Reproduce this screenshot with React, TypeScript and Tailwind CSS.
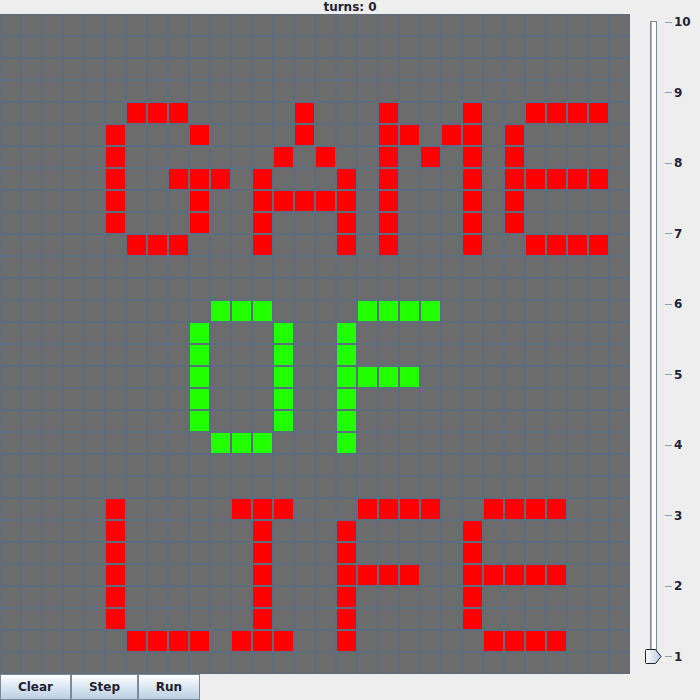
import React from "react";

const R: Record<number, number[]> = {
  4: [6, 7, 8, 14, 18, 22, 25, 26, 27, 28],
  5: [5, 9, 14, 18, 19, 21, 22, 24],
  6: [5, 13, 15, 18, 20, 22, 24],
  7: [5, 8, 9, 10, 12, 16, 18, 22, 24, 25, 26, 27, 28],
  8: [5, 9, 12, 13, 14, 15, 16, 18, 22, 24],
  9: [5, 9, 12, 16, 18, 22, 24],
  10: [6, 7, 8, 12, 16, 18, 22, 25, 26, 27, 28],
  22: [5, 11, 12, 13, 17, 18, 19, 20, 23, 24, 25, 26],
  23: [5, 12, 16, 22],
  24: [5, 12, 16, 22],
  25: [5, 12, 16, 17, 18, 19, 22, 23, 24, 25, 26],
  26: [5, 12, 16, 22],
  27: [5, 12, 16, 22],
  28: [6, 7, 8, 9, 11, 12, 13, 16, 23, 24, 25, 26],
};
const G: Record<number, number[]> = {
  13: [10, 11, 12, 17, 18, 19, 20],
  14: [9, 13, 16],
  15: [9, 13, 16],
  16: [9, 13, 16, 17, 18, 19],
  17: [9, 13, 16],
  18: [9, 13, 16],
  19: [10, 11, 12, 16],
};

const font = { fontFamily: '"DejaVu Sans", Verdana, sans-serif' };

function Cell({ r, c }: { r: number; c: number }) {
  const red = R[r]?.includes(c);
  const green = G[r]?.includes(c);
  const bg = red ? "bg-[#ff0000]" : green ? "bg-[#22ff00]" : "bg-[#6c6c6c]";
  return <div className={`border border-[#5d6d80] ${bg}`} />;
}

function Btn({ label, w }: { label: string; w: string }) {
  return (
    <button
      className={`${w} h-[26px] border border-[#7b8a99] bg-gradient-to-b from-[#ffffff] to-[#b9cfe4] text-[12px] font-bold text-[#222233] flex items-center justify-center`}
      style={font}
    >
      {label}
    </button>
  );
}

export default function App() {
  const cells = [];
  for (let r = 0; r < 30; r++) for (let c = 0; c < 30; c++) cells.push(<Cell key={`${r}-${c}`} r={r} c={c} />);
  const labels = [10, 9, 8, 7, 6, 5, 4, 3, 2, 1];
  return (
    <div className="w-[700px] h-[700px] bg-[#eeeeee] flex flex-col overflow-hidden" style={font}>
      <div className="h-[14px] text-center text-[12px] leading-[14px] font-bold text-[#222233]">turns: 0</div>
      <div className="flex h-[660px]">
        <div className="grid grid-cols-[repeat(30,21px)] grid-rows-[repeat(30,22px)] w-[630px] h-[660px]">{cells}</div>
        <div className="relative w-[70px] h-[660px] flex">
          <div className="ml-[20px] mt-[7px] w-[7px] h-[642px] border border-[#7c8b9a] bg-white flex">
            <div className="w-px h-full bg-[#a8b8c8]" />
          </div>
          <div className="ml-[8px] mt-px h-[649px] flex flex-col justify-between">
            {labels.map((l) => (
              <div key={l} className="h-[14px] flex items-center">
                <div className="w-[7px] h-px bg-[#8ea4ba]" />
                <span className="ml-[2px] text-[12px] leading-[14px] font-bold text-[#222233]">{l}</span>
              </div>
            ))}
          </div>
          <svg className="absolute left-[15px] top-[635px]" width="17" height="16" viewBox="0 0 17 16">
            <defs>
              <linearGradient id="tg" x1="0" y1="0" x2="1" y2="0">
                <stop offset="0" stopColor="#ffffff" />
                <stop offset="1" stopColor="#b3cbe3" />
              </linearGradient>
            </defs>
            <path d="M1.5 0.5 H10.5 L16 7.5 L10.5 14.5 H1.5 Q0.5 14.5 0.5 13.5 V1.5 Q0.5 0.5 1.5 0.5 Z" fill="url(#tg)" stroke="#222" strokeWidth="1" />
          </svg>
        </div>
      </div>
      <div className="flex h-[26px]">
        <Btn label="Clear" w="w-[71px]" />
        <Btn label="Step" w="w-[67px]" />
        <Btn label="Run" w="w-[62px]" />
      </div>
    </div>
  );
}
